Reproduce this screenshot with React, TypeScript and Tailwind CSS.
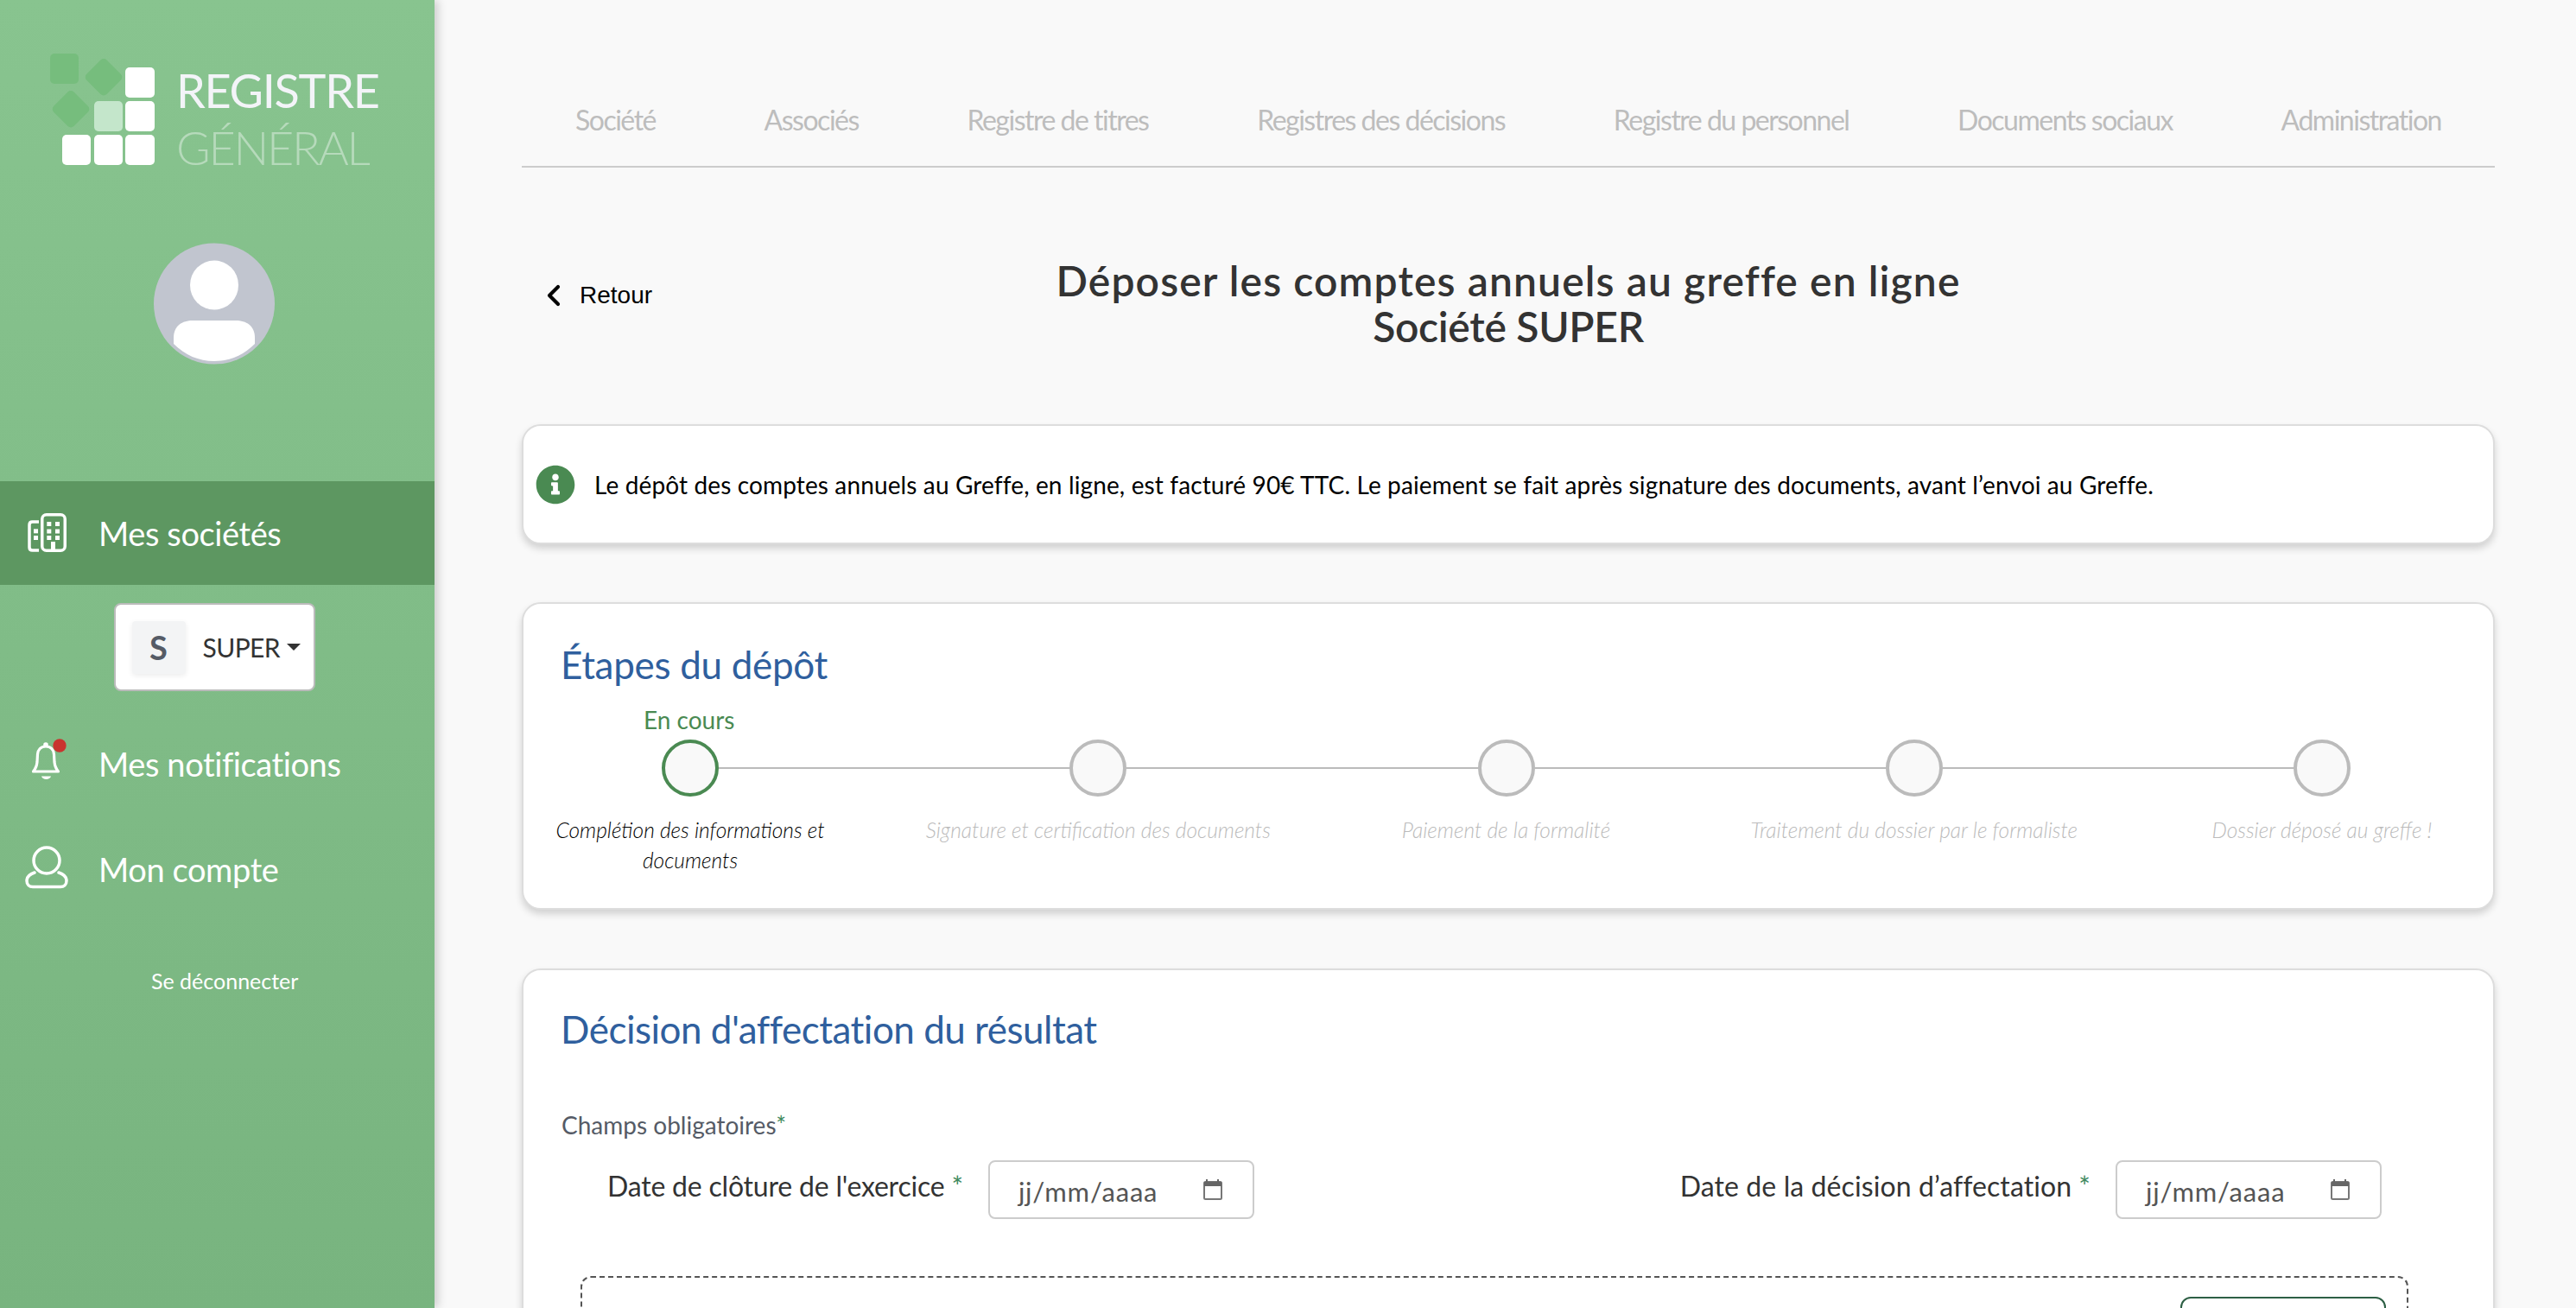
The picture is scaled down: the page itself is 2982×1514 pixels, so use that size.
import React from "react";
import { FaInfoCircle } from "react-icons/fa";
import { ChevronLeft } from "lucide-react";

const sans = "font-['Lato','Noto_Sans',sans-serif]";

function Logo() {
  return (
    <svg width="130" height="136" viewBox="0 0 130 136" className="shrink-0" aria-hidden="true">
      <rect x="0" y="0" width="33" height="35" rx="5" fill="#76bd7d" />
      <rect x="45" y="11" width="33" height="33" rx="5" fill="#76bd7d" transform="rotate(45 62 28)" />
      <rect x="7" y="48" width="33" height="33" rx="5" fill="#76bd7d" transform="rotate(45 24 65)" />
      <rect x="87" y="16" width="34" height="35" rx="5" fill="#ffffff" />
      <rect x="87" y="55" width="34" height="35" rx="5" fill="#ffffff" />
      <rect x="51" y="55" width="33" height="35" rx="5" fill="#c4e6cb" />
      <rect x="14" y="94" width="33" height="35" rx="5" fill="#ffffff" />
      <rect x="51" y="94" width="33" height="35" rx="5" fill="#ffffff" />
      <rect x="87" y="94" width="34" height="35" rx="5" fill="#ffffff" />
    </svg>
  );
}

function Avatar() {
  return (
    <svg width="140" height="141" viewBox="0 0 140 141" aria-hidden="true">
      <circle cx="70" cy="70.500" r="70" fill="#c1c5cf" />
      <ellipse cx="70" cy="49" rx="28" ry="28.500" fill="#ffffff" />
      <path d="M23 117 V110 C23 96 33 90 45 90 H95 C107 90 117 96 117 110 V117 C104 130 88 137 70 137 C52 137 36 130 23 117 Z" fill="#ffffff" />
    </svg>
  );
}

function BuildingIcon() {
  return (
    <svg width="45" height="45" viewBox="0 0 45 45" fill="none" aria-hidden="true">
      <path d="M13 10 H5.500 Q2 10 2 13.500 V39.500 Q2 43 5.500 43 H13" stroke="#fff" strokeWidth="3.500" />
      <rect x="16.750" y="1.750" width="26.500" height="41.500" rx="5" stroke="#fff" strokeWidth="3.500" />
      <g fill="#fff">
        <rect x="7" y="18.300" width="5" height="5" />
        <rect x="7" y="26" width="5" height="5" />
        <rect x="22.300" y="10" width="5" height="5" />
        <rect x="32" y="10" width="5" height="5" />
        <rect x="22.300" y="18.500" width="5" height="5" />
        <rect x="32" y="18.500" width="5" height="5" />
        <rect x="22.300" y="26" width="5" height="5" />
        <rect x="32" y="26" width="5" height="5" />
        <rect x="27" y="33" width="5" height="11" />
      </g>
    </svg>
  );
}

function BellIcon() {
  return (
    <svg width="40" height="48" viewBox="0 -4 40 48" fill="none" aria-hidden="true">
      <path d="M16 5 C10 5 7 9 6.500 14 L6 23 C5.500 28 4 31 1.500 34 H30.500 C28 31 26.500 28 26 23 L25.500 14 C25 9 22 5 16 5 Z" stroke="#fff" strokeWidth="3.200" strokeLinejoin="round" />
      <circle cx="16" cy="3" r="2.800" fill="#fff" />
      <path d="M11 39.500 H22 C21 44 12 44 11 39.500 Z" fill="#fff" />
      <circle cx="32" cy="4" r="7.700" fill="#c9342f" />
    </svg>
  );
}

function UserIcon() {
  return (
    <svg width="50" height="50" viewBox="0 0 50 50" fill="none" aria-hidden="true">
      <circle cx="25" cy="17" r="15" stroke="#fff" strokeWidth="3.500" />
      <path d="M11 31 C5 33 2 36 2 40.500 C2 45 5 47.500 9 47.500 H41 C45 47.500 48 45 48 40.500 C48 36 45 33 39 31" stroke="#fff" strokeWidth="3.500" strokeLinecap="round" />
    </svg>
  );
}

function CalendarIcon() {
  return (
    <svg width="22" height="24" viewBox="0 0 22 24" fill="none" aria-hidden="true">
      <rect x="1" y="3" width="20" height="20" rx="1.500" stroke="#777" strokeWidth="2" />
      <rect x="1" y="3" width="20" height="5" fill="#666" />
      <rect x="3" y="0" width="2" height="4" fill="#666" />
      <rect x="16" y="0" width="2" height="4" fill="#666" />
    </svg>
  );
}

function NavItem({ icon, label, className, iconClass }: { icon: React.ReactNode; label: string; className: string; iconClass: string }) {
  return (
    <div className={`flex items-center ${className}`}>
      <div className={`w-[114px] flex shrink-0 ${iconClass}`}>{icon}</div>
      <span className="text-[38px] leading-[48px] text-white tracking-[-0.400px]">{label}</span>
    </div>
  );
}

function Sidebar() {
  return (
    <aside className={`w-[503px] shrink-0 h-full flex flex-col items-stretch bg-gradient-to-b from-[#88c48f] to-[#78b47f] shadow-[4px_0_10px_rgba(0,0,0,0.18)] z-10 ${sans}`}>
      <div className="flex items-start pt-[62px] pl-[58px] h-[281px]">
        <Logo />
        <div className="ml-[16px] flex flex-col">
          <span className="mt-[16px] text-[54px] leading-[54px] text-[#f3f4f8] tracking-[-1.300px]">REGISTRE</span>
          <span className="mt-[12px] text-[54px] leading-[54px] font-light text-[#b6dabb] tracking-[-2.300px]">GÉNÉRAL</span>
        </div>
      </div>
      <div className="flex justify-center -ml-[7px]"><Avatar /></div>
      <NavItem icon={<BuildingIcon />} label="Mes sociétés" iconClass="pl-[32px] -mt-[2px]" className="mt-[135px] h-[120px] bg-[#5d9761]" />
      <div className="mt-[21px] self-center w-[233px] h-[102px] -ml-[7px] bg-white border-2 border-[#bbbbbb] rounded-[8px] flex items-center pl-[19px]">
        <div className="w-[62px] h-[61px] bg-[#f3f4f5] rounded-[4px] shadow-[0_2px_6px_rgba(0,0,0,0.08)] flex items-center justify-center text-[#555b66] text-[38px] font-bold">S</div>
        <span className="ml-[20px] text-[30px] leading-[36px] text-[#333333] tracking-[-0.600px]">SUPER</span>
        <span className="ml-[8px] w-0 h-0 border-x-[8px] border-x-transparent border-t-[8px] border-t-[#333333]" />
      </div>
      <NavItem icon={<BellIcon />} label="Mes notifications" iconClass="pl-[37px] -mt-[10px]" className="mt-[60px] h-[48px]" />
      <NavItem icon={<UserIcon />} label="Mon compte" iconClass="pl-[29px] -mt-[5px]" className="mt-[74px] h-[48px]" />
      <div className="mt-[89px] pl-[175px] text-[25px] leading-[32px] text-white">Se déconnecter</div>
    </aside>
  );
}

const tabs = ["Société", "Associés", "Registre de titres", "Registres des décisions", "Registre du personnel", "Documents sociaux", "Administration"];
const steps: { label: React.ReactNode; active?: boolean }[] = [
  { label: <>Complétion des informations et<br />documents</>, active: true },
  { label: "Signature et certification des documents" },
  { label: "Paiement de la formalité" },
  { label: "Traitement du dossier par le formaliste" },
  { label: "Dossier déposé au greffe !" },
];

function Card({ className, children }: { className: string; children: React.ReactNode }) {
  return (
    <section className={`bg-white border-2 border-[#dddddd] rounded-[22px] shadow-[0_5px_8px_rgba(0,0,0,0.16)] ${className}`}>{children}</section>
  );
}

function DateField({ label, labelClass }: { label: string; labelClass: string }) {
  return (
    <div className="flex items-start">
      <span className={`mt-[12px] text-[32px] leading-[36px] text-[#333333] ${labelClass}`}>{label}<span className="ml-[8px] text-[#3e8a5e]">*</span></span>
      <div className="ml-[29px] w-[308px] h-[68px] bg-white border-2 border-[#cccccc] rounded-[8px] flex items-center justify-between pl-[33px] pr-[35px]">
        <span className="text-[31px] leading-[34px] mt-[4px] text-[#555555] tracking-[0.800px]">jj/mm/aaaa</span>
        <CalendarIcon />
      </div>
    </div>
  );
}

function Main() {
  return (
    <main className={`flex-1 min-w-0 h-full overflow-hidden bg-[#f9f9f9] pl-[101px] pr-[94px] ${sans}`}>
      <nav className="pt-[115px] pb-[29px] px-[62px] border-b-2 border-[#cccccc] flex justify-between">
        {tabs.map((t) => (
          <span key={t} className="text-[32px] leading-[48px] text-[#bdbdbd] tracking-[-1.500px] whitespace-nowrap">{t}</span>
        ))}
      </nav>
      <header className="mt-[104px] grid grid-cols-[1fr_auto_1fr] items-start">
        <a className="mt-[28px] pl-[17px] flex items-center h-[32px] font-['Liberation_Sans',sans-serif] text-[28px] text-black">
          <ChevronLeft size={40} strokeWidth={2.500} className="shrink-0" />
          <span className="ml-[10px]">Retour</span>
        </a>
        <h1 className="text-center text-[48px] leading-[53px] font-semibold text-[#333333]">
          <span className="tracking-[1.130px]">Déposer les comptes annuels au greffe en ligne</span>
          <br />
          <span className="tracking-[-0.300px]">Société SUPER</span>
        </h1>
      </header>
      <Card className="mt-[87px] h-[139px] flex items-center pl-[14px]">
        <FaInfoCircle size={46} color="#4a8a52" className="shrink-0" />
        <p className="ml-[22px] text-[28px] leading-[36px] text-black whitespace-nowrap tracking-[0.130px]">Le dépôt des comptes annuels au Greffe, en ligne, est facturé 90€ TTC. Le paiement se fait après signature des documents, avant l’envoi au Greffe.</p>
      </Card>
      <Card className="mt-[67px] h-[356px] pt-[42px]">
        <h2 className="pl-[43px] text-[44px] leading-[56px] text-[#2f5f9e] tracking-[-0.300px]">Étapes du dépôt</h2>
        <div className="mt-[18px] pl-[139px] text-[28px] leading-[36px] text-[#4a8a52]">En cours</div>
        <div className="mt-[5px] ml-[33px] mr-[38px] px-[127px] flex items-center">
          {steps.map((s, i) => (
            <React.Fragment key={i}>
              {i > 0 && <div className="flex-1 h-[2px] bg-[#bbbbbb]" />}
              <div className={`w-[66px] h-[66px] rounded-full bg-[#f9f9f9] border-[4px] shrink-0 ${s.active ? "border-[#4a8a52]" : "border-[#bbbbbb]"}`} />
            </React.Fragment>
          ))}
        </div>
        <div className="mt-[21px] ml-[33px] mr-[38px] flex justify-between">
          {steps.map((s, i) => (
            <div key={i} className="w-[320px] flex justify-center">
              <p className={`text-center whitespace-nowrap text-[24.500px] leading-[35px] italic font-light ${s.active ? "text-black" : "text-[#bbbbbb]"}`}>{s.label}</p>
            </div>
          ))}
        </div>
      </Card>
      <Card className="mt-[68px] h-[460px] pt-[40px]">
        <h2 className="pl-[43px] text-[44px] leading-[56px] text-[#2f5f9e] tracking-[-0.500px]">Décision d'affectation du résultat</h2>
        <div className="mt-[67px] pl-[44px] text-[28px] leading-[32px] text-[#555b66]">Champs obligatoires<span className="text-[#3e8a5e]">*</span></div>
        <div className="mt-[25px] pl-[97px] pr-[129px] flex justify-between">
          <DateField label="Date de clôture de l'exercice" labelClass="tracking-[-0.200px]" />
          <DateField label="Date de la décision d’affectation" labelClass="tracking-[0.100px]" />
        </div>
        <div className="mt-[66px] ml-[66px] mr-[98px] h-[200px] border-2 border-dashed border-[#555555] rounded-[12px] flex justify-end items-start pt-[22px] pr-[24px]">
          <div className="w-[238px] h-[70px] bg-white border-2 border-[#2d5f45] rounded-[12px]" />
        </div>
      </Card>
    </main>
  );
}

export default function App() {
  return (
    <div className="w-[2982px] h-[1514px] flex overflow-hidden">
      <Sidebar />
      <Main />
    </div>
  );
}
